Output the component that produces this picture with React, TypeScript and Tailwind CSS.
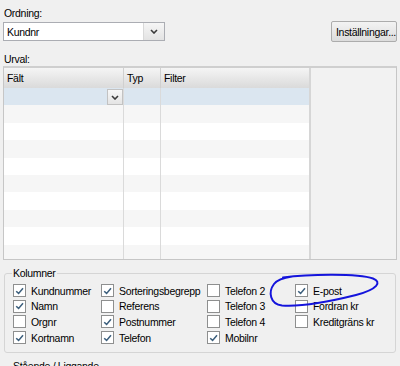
import React from "react";

function Chevron() {
  return (
    <svg width="8" height="5" viewBox="0 0 8 5">
      <path d="M1 1 L4 4 L7 1" fill="none" stroke="#3a3a3a" strokeWidth="1.6" />
    </svg>
  );
}

function Cb({ checked }: { checked: boolean }) {
  return (
    <div className="w-[13px] h-[13px] border border-[#8e8f8f] bg-white flex items-center justify-center shrink-0">
      {checked && (
        <svg width="9" height="8" viewBox="0 0 9 8">
          <path d="M1.2 4.2 L3.6 6.4 L8 1.2" fill="none" stroke="#3b5e7c" strokeWidth="1.5" />
        </svg>
      )}
    </div>
  );
}

const items: [string, boolean][] = [
  ["Kundnummer", true],
  ["Namn", true],
  ["Orgnr", false],
  ["Kortnamn", true],
  ["Sorteringsbegrepp", true],
  ["Referens", false],
  ["Postnummer", true],
  ["Telefon", true],
  ["Telefon 2", false],
  ["Telefon 3", false],
  ["Telefon 4", false],
  ["Mobilnr", true],
  ["E-post", true],
  ["Fordran kr", false],
  ["Kreditgräns kr", false],
];

const rows = Array.from({ length: 10 }, (_, i) => i);

export default function App() {
  return (
    <div className="relative w-[400px] h-[366px] overflow-hidden bg-[#f0f0f0] text-[10.5px] leading-[12px] tracking-[-0.3px] text-black font-['Liberation_Sans',Arial,sans-serif]">
      <div className="pt-[7px] pl-[4px]">Ordning:</div>
      <div className="mt-[2px] flex items-start px-[3px]">
        <div className="mt-[1px] h-[19px] w-[162px] border border-[#abadb3] bg-white flex">
          <div className="flex-1 pl-[3px] flex items-center">Kundnr</div>
          <div className="w-[21px] border-l border-[#d9d9d9] bg-gradient-to-b from-[#f6f6f6] to-[#e3e3e3] flex items-center justify-center">
            <Chevron />
          </div>
        </div>
        <div className="ml-auto w-[66px] h-[21px] border border-[#acacac] rounded-[2px] bg-gradient-to-b from-[#f3f3f3] to-[#dcdcdc] flex items-center pl-[4px] whitespace-nowrap overflow-hidden">
          Inställningar...
        </div>
      </div>
      <div className="mt-[11px] pl-[4px]">Urval:</div>
      <div className="mt-[1px] mx-[3px] h-[194px] border border-[#c6c6c6] border-t-2 border-t-[#cfcfcf] flex overflow-hidden">
        <div className="w-[307px] border-r-2 border-[#d6d6d6] flex flex-col bg-white">
          <div className="h-[20px] shrink-0 flex bg-gradient-to-b from-[#f5f5f5] to-[#dadada]">
            <div className="w-[120px] border-r border-[#d0d0d0] pl-[3px] flex items-center">Fält</div>
            <div className="w-[37px] border-r border-[#d0d0d0] pl-[3px] flex items-center">Typ</div>
            <div className="flex-1 pl-[3px] flex items-center">Filter</div>
          </div>
          {rows.map((i) => (
            <div
              key={i}
              className={
                "h-[17.4px] shrink-0 flex " +
                (i === 0 ? "bg-[#dbe6f0]" : i % 2 === 1 ? "bg-[#f6f6f6]" : "bg-white")
              }
            >
              <div className="w-[120px] border-r border-[#dadada] flex justify-end">
                {i === 0 && (
                  <div className="w-[16px] h-[16px] mt-[1px] border border-[#c2c2c2] bg-gradient-to-b from-[#f7f7f7] to-[#e4e4e4] flex items-center justify-center">
                    <Chevron />
                  </div>
                )}
              </div>
              <div className="w-[37px] border-r border-[#dadada]"></div>
              <div className="flex-1"></div>
            </div>
          ))}
        </div>
        <div className="flex-1 bg-[#f2f2f2]"></div>
      </div>
      <div className="relative mt-[13px] mx-[4px] h-[80px] border border-[#d5d5d5] rounded-[3px]">
        <div className="absolute top-[-7px] left-[7px] px-[1px] bg-[#f0f0f0]">Kolumner</div>
        <div className="pt-[9px] pl-[8px] grid grid-flow-col grid-rows-4 grid-cols-[88px_106px_88px_1fr]">
          {items.map(([label, checked]) => (
            <div key={label} className="h-[15.6px] flex items-center gap-[5px] whitespace-nowrap">
              <Cb checked={checked} />
              <span>{label}</span>
            </div>
          ))}
        </div>
      </div>
      <div className="relative mt-[13px] mx-[4px] h-[60px] border border-[#d5d5d5] rounded-[3px]">
        <div className="absolute top-[-7px] left-[7px] px-[1px] bg-[#f0f0f0]">Stående / Liggande</div>
      </div>
      <svg className="absolute left-0 top-0 pointer-events-none" width="400" height="366" viewBox="0 0 400 366">
        <path
          d="M283 277.5 C310 274, 358 273.5, 373 278.5 C382 282, 378 289, 356 295 C330 301.5, 302 307, 282 305.5 C270 304, 268 292, 274 284 C277 280, 282 278, 292 276.5"
          fill="none"
          stroke="#1414dc"
          strokeWidth="2"
          strokeLinecap="round"
        />
      </svg>
    </div>
  );
}
